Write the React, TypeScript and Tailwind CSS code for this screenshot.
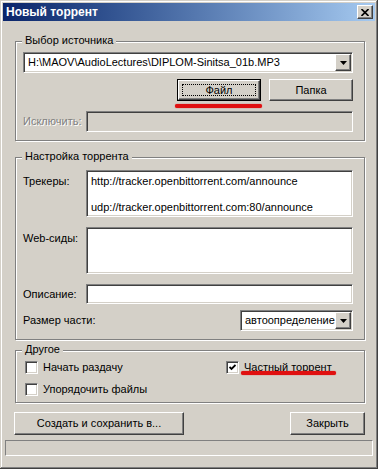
import React from "react";

const sunken =
  "border border-t-[#808080] border-l-[#808080] border-b-white border-r-white shadow-[inset_1px_1px_#404040,inset_-1px_-1px_#d4d0c8]";
const raised =
  "border border-t-white border-l-white border-b-[#404040] border-r-[#404040] shadow-[inset_-1px_-1px_#808080]";

const Arrow = () => (
  <svg width="7" height="4" viewBox="0 0 7 4">
    <path d="M0 0h7L3.5 4z" fill="#000" />
  </svg>
);

const Combo = ({ value, className }: { value: string; className: string }) => (
  <div className={`flex bg-white p-[1px] ${sunken} ${className}`}>
    <span className="flex-1 self-center pl-[3px] whitespace-nowrap overflow-hidden leading-[13px]">
      {value}
    </span>
    <div className={`w-[16px] bg-[#d4d0c8] flex items-center justify-center ${raised}`}>
      <Arrow />
    </div>
  </div>
);

const Button = ({
  children,
  className,
  isDefault,
}: {
  children: React.ReactNode;
  className: string;
  isDefault?: boolean;
}) =>
  isDefault ? (
    <div className={`border border-black ${className}`}>
      <div className={`h-full p-[3px] ${raised}`}>
        <div className="h-full border border-dotted border-black flex items-center justify-center">
          {children}
        </div>
      </div>
    </div>
  ) : (
    <div className={`flex items-center justify-center ${raised} ${className}`}>{children}</div>
  );

const Check = ({ label, checked }: { label: string; checked?: boolean }) => (
  <div className="flex items-center">
    <div className={`w-[13px] h-[13px] bg-white flex items-center justify-center ${sunken}`}>
      {checked && (
        <svg width="7" height="7" viewBox="0 0 7 7">
          <path d="M0.5 3L2.5 5L6.5 1" stroke="#000" strokeWidth="1.8" fill="none" />
        </svg>
      )}
    </div>
    <span className="ml-[5px] leading-[13px]">{label}</span>
  </div>
);

const Group = ({
  title,
  className,
  children,
}: {
  title: string;
  className: string;
  children: React.ReactNode;
}) => (
  <div
    className={`relative w-[350px] border border-[#808080] shadow-[inset_1px_1px_#fff,1px_1px_#fff] ${className}`}
  >
    <span className="absolute left-[6px] top-[-8px] px-[3px] bg-[#d4d0c8] leading-[13px]">{title}</span>
    {children}
  </div>
);

const App = () => {
  return (
    <div className="w-[378px] h-[469px] bg-[#d4d0c8] p-[3px] flex flex-col text-[11px] text-black font-['Liberation_Sans',Arial,sans-serif] shadow-[inset_-1px_-1px_#404040,inset_1px_1px_#d4d0c8,inset_-2px_-2px_#808080,inset_2px_2px_#fff]">
      <div className="h-[18px] flex items-center justify-between pl-[3px] pr-[2px] bg-linear-to-r from-[#0a246a] to-[#a6caf0]">
        <span className="text-white font-bold text-[12px] leading-[14px]">Новый торрент</span>
        <div className={`w-[16px] h-[14px] bg-[#d4d0c8] flex items-center justify-center ${raised}`}>
          <svg width="8" height="7" viewBox="0 0 8 7">
            <path d="M0.5 0L7.5 7M7.5 0L0.5 7" stroke="#000" strokeWidth="1.6" />
          </svg>
        </div>
      </div>

      <div className="pl-[12px] flex flex-col">
        <Group title="Выбор источника" className="mt-[20px] h-[100px]">
          <Combo value="H:\MAOV\AudioLectures\DIPLOM-Sinitsa_01b.MP3" className="ml-[7px] mt-[10px] w-[330px] h-[21px]" />
          <div className="ml-[7px] mt-[6px] w-[330px] flex justify-end gap-[8px]">
            <div className="relative">
              <Button isDefault className="w-[84px] h-[22px]">
                Файл
              </Button>
              <div className="absolute left-[-2px] right-[-1px] top-[25px] h-[4px] rounded-full bg-[#e01010] shadow-[0_0_1px_#e01010]" />
            </div>
            <Button className="w-[84px] h-[22px]">Папка</Button>
          </div>
          <div className="ml-[7px] mt-[10px] flex items-center">
            <span className="w-[63px] text-[#808080] [text-shadow:1px_1px_#fff] leading-[13px]">Исключить:</span>
            <div className={`w-[267px] h-[21px] ${sunken}`} />
          </div>
        </Group>

        <Group title="Настройка торрента" className="mt-[16px] h-[183px]">
          <div className="ml-[7px] mt-[12px] flex">
            <span className="w-[63px] pt-[5px] leading-[13px]">Трекеры:</span>
            <div className={`w-[267px] h-[47px] bg-white pt-[4px] pl-[4px] leading-[13px] ${sunken}`}>
              <div>http://tracker.openbittorrent.com/announce</div>
              <div>&nbsp;</div>
              <div>udp://tracker.openbittorrent.com:80/announce</div>
            </div>
          </div>
          <div className="ml-[7px] mt-[10px] flex">
            <span className="w-[63px] pt-[5px] leading-[13px]">Web-сиды:</span>
            <div className={`w-[267px] h-[47px] bg-white ${sunken}`} />
          </div>
          <div className="ml-[7px] mt-[10px] flex items-center">
            <span className="w-[63px] leading-[13px]">Описание:</span>
            <div className={`w-[267px] h-[20px] bg-white ${sunken}`} />
          </div>
          <div className="ml-[7px] mt-[6px] flex items-center">
            <span className="w-[217px] leading-[13px]">Размер части:</span>
            <Combo value="автоопределение" className="w-[113px] h-[21px]" />
          </div>
        </Group>

        <Group title="Другое" className="mt-[10px] h-[53px]">
          <div className="ml-[9px] mt-[10px] flex">
            <div className="w-[201px]">
              <Check label="Начать раздачу" />
            </div>
            <div className="relative">
              <Check label="Частный торрент" checked />
              <div className="absolute left-[15px] w-[95px] top-[10px] h-[4px] rounded-full bg-[#e01010] shadow-[0_0_1px_#e01010]" />
            </div>
          </div>
          <div className="ml-[9px] mt-[9px] flex">
            <Check label="Упорядочить файлы" />
          </div>
        </Group>

        <div className="ml-[-1px] mt-[9px] w-[351px] flex justify-between">
          <Button className="w-[170px] h-[23px]">Создать и сохранить в...</Button>
          <Button className="w-[75px] h-[23px]">Закрыть</Button>
        </div>
      </div>

      <div className="ml-[2px] mt-[5px] w-[368px] h-[16px] border border-t-[#808080] border-l-[#808080] border-b-white border-r-white" />
    </div>
  );
};

export default App;
